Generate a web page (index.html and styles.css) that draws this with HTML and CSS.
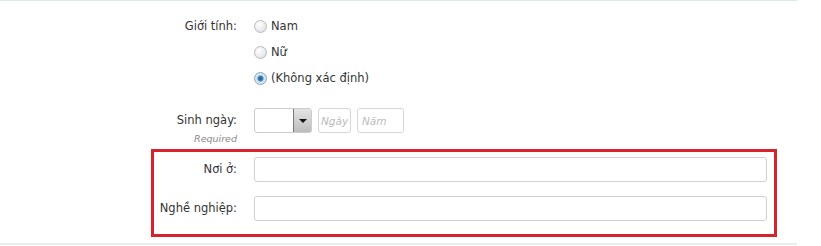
FILE: index.html
```html
<!DOCTYPE html>
<html lang="vi">
<head>
    <meta charset="UTF-8">
    <title>Thông tin cá nhân</title>
    <link rel="stylesheet" href="styles.css">
</head>
<body>
    <div class="form-block">
        <!-- Gender -->
        <div class="row gender-row">
            <div class="label">Giới tính:</div>
            <ul class="radio-list">
                <li><label><input type="radio" name="gender"> Nam</label></li>
                <li><label><input type="radio" name="gender"> Nữ</label></li>
                <li><label><input type="radio" name="gender" checked> (Không xác định)</label></li>
            </ul>
        </div>

        <!-- Birthday -->
        <div class="row dob-row">
            <div class="label">Sinh ngày:<span class="hint">Required</span></div>
            <div class="dob">
                <div class="select-box"><span class="arrow"></span></div>
                <input type="text" class="day" placeholder="Ngày">
                <input type="text" class="year" placeholder="Năm">
            </div>
        </div>

        <!-- Highlighted fields -->
        <div class="highlight">
            <div class="row">
                <div class="label">Nơi ở:</div>
                <input type="text" class="text-field">
            </div>
            <div class="row">
                <div class="label">Nghề nghiệp:</div>
                <input type="text" class="text-field">
            </div>
        </div>
    </div>
</body>
</html>
```

FILE: styles.css
```css
body {
    margin: 0;
    background: #fff;
    font-family: "DejaVu Sans", Verdana, sans-serif;
    font-size: 11.5px;
    color: #333;
}
.form-block {
    width: 797px;
    height: 245px;
    border-top: 1px solid #dde7ee;
    border-bottom: 2px solid #e9edf0;
    box-sizing: border-box;
    padding-top: 12px;
}
.row {
    display: grid;
    grid-template-columns: 237px 1fr;
    column-gap: 17px;
}
.label {
    text-align: right;
    line-height: 26px;
}
.radio-list {
    list-style: none;
    margin: 0;
    padding: 0;
}
.radio-list li {
    height: 26px;
    line-height: 26px;
}
.radio-list label {
    display: flex;
    align-items: center;
    gap: 4px;
}
input[type="radio"] {
    appearance: none;
    width: 13px;
    height: 13px;
    margin: 0;
    border: 1px solid #b9b9b9;
    border-radius: 50%;
    background: radial-gradient(circle at 35% 30%, #fff, #e6e6e6 70%, #d0d0d0);
    box-sizing: border-box;
}
input[type="radio"]:checked {
    background: radial-gradient(circle, #1f5e8d 0, #3f86bd 2.5px, #cfe0ee 3.5px, #f4f4f4 100%);
    border-color: #8aa4b8;
}
.dob-row {
    margin-top: 17px;
    height: 37px;
}
.dob-row .label {
    line-height: 16px;
    padding-top: 4px;
}
.hint {
    display: block;
    font-size: 9.5px;
    line-height: 12px;
    font-style: italic;
    color: #888;
    margin-top: 5px;
}
.dob {
    display: flex;
    gap: 6px;
    height: 25px;
}
.select-box {
    width: 58px;
    height: 25px;
    box-sizing: border-box;
    border: 1px solid #ccc;
    border-radius: 3px;
    display: flex;
    justify-content: flex-end;
    background: #fff;
}
.arrow {
    width: 17px;
    height: 23px;
    background: linear-gradient(#e4e4e4, #bdbdbd);
    border-left: 1px solid #777;
    position: relative;
}
.arrow::after {
    content: "";
    position: absolute;
    left: 5px;
    top: 10px;
    border-left: 4px solid transparent;
    border-right: 4px solid transparent;
    border-top: 4px solid #111;
}
.dob input {
    height: 25px;
    box-sizing: border-box;
    border: 1px solid #d6d6d6;
    border-radius: 3px;
    padding: 0 2px;
    font-family: inherit;
    font-size: 10.5px;
}
.dob input::placeholder {
    color: #bbb;
    font-style: italic;
}
.dob .day {
    width: 33px;
}
.dob .year {
    width: 47px;
    padding: 0 4px;
}
.highlight {
    width: 626px;
    box-sizing: border-box;
    margin: 4px 0 0 151px;
    border: 3px solid #d7232d;
    padding: 5px 7px 13px 0;
    display: flex;
    flex-direction: column;
    gap: 14px;
}
.highlight .row {
    grid-template-columns: 83px 513px;
}
.highlight .label {
    line-height: 25px;
    white-space: nowrap;
}
.text-field {
    height: 25px;
    box-sizing: border-box;
    border: 1px solid #d0d0d0;
    border-radius: 3px;
    font-family: inherit;
}
```
